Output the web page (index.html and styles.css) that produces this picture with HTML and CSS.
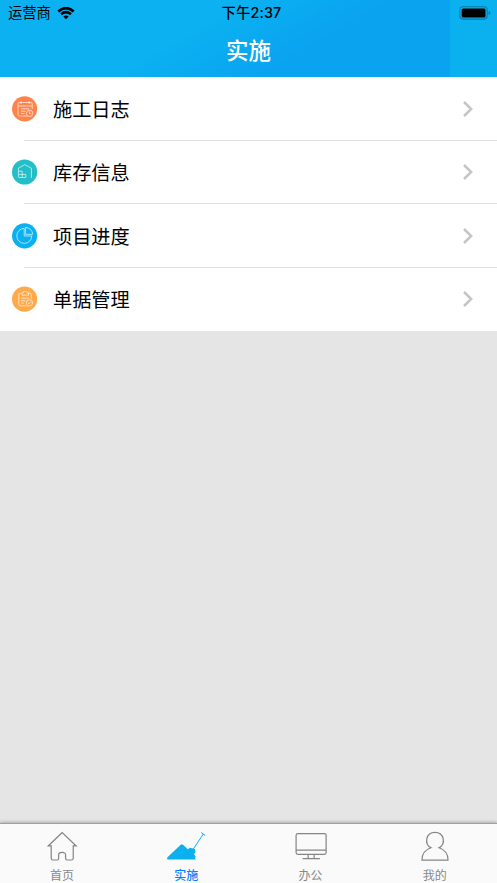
FILE: index.html
```html
<!DOCTYPE html>
<html lang="zh-CN">
<head>
<meta charset="utf-8">
<title>实施</title>
<link rel="stylesheet" href="styles.css">
</head>
<body>
<div class="app">
  <header class="header">
    <div class="status">
      <div class="carrier"><span>运营商</span>
        <svg class="wifi" viewBox="0 0 17 13"><path d="M8.5 12.3 5.8 9.6Q8.5 7.5 11.2 9.6Z"/><path class="arc" d="M3.5 7.2Q8.5 3 13.5 7.2M.8 4.4Q8.5-2.2 16.2 4.4"/></svg>
      </div>
      <div class="clock">下午2:37</div>
      <svg class="battery" viewBox="0 0 32 14"><rect class="shell" x=".8" y=".7" width="27.4" height="12.4" rx="3"/><rect x="2.7" y="2.6" width="23.8" height="8.8" rx="1.5"/><path class="tip" d="M29.6 4.9q1.8 0 1.8 2t-1.8 2z"/></svg>
    </div>
    <h1 class="title">实施</h1>
  </header>
  <main class="content">
    <ul class="list">
      <li class="row">
        <svg class="icon orange" viewBox="0 0 26 26"><circle cx="12.6" cy="12.8" r="12.6"/><path d="M15 20H7.4Q6 20 6 18.6V7.8Q6 6.5 7.4 6.5H18.8Q20.2 6.5 20.2 7.8V13M6 10H20.2M9 5v3M17.2 5v3M9 12.8h8M9 15.2h4.5M9 17.5h3.5M17.5 15.3v2.2h1.8"/><circle class="line" cx="17.6" cy="17.3" r="3.2"/></svg>
        <span class="label">施工日志</span>
        <svg class="chevron" viewBox="0 0 10 16"><path d="m1 1 7.2 7L1 15"/></svg>
      </li>
      <li class="row">
        <svg class="icon teal" viewBox="0 0 26 26"><circle cx="12.6" cy="13" r="12.6"/><path d="M6.4 18.5V9.2L12.8 5.6 19.4 9.2V18.8M7 12.2H10.2V18.5H7M7 15.4H13.8V18.5H10.2"/></svg>
        <span class="label">库存信息</span>
        <svg class="chevron" viewBox="0 0 10 16"><path d="m1 1 7.2 7L1 15"/></svg>
      </li>
      <li class="row">
        <svg class="icon blue" viewBox="0 0 26 26"><circle cx="12.6" cy="12.8" r="12.6"/><path d="M12.2 5.4A7.5 7.5 0 1 0 19.8 13H12.2ZM13.6 4.4V11.4H20.6A7 7 0 0 0 13.6 4.4Z"/></svg>
        <span class="label">项目进度</span>
        <svg class="chevron" viewBox="0 0 10 16"><path d="m1 1 7.2 7L1 15"/></svg>
      </li>
      <li class="row">
        <svg class="icon amber" viewBox="0 0 26 26"><circle cx="12.6" cy="13.2" r="12.6"/><path d="M14 19.8H8Q6.8 19.8 6.8 18.6V8.5Q6.8 7.2 8 7.2H10M16.5 7.2H18Q19.3 7.2 19.3 8.5V13M10 9.2V6.8Q11.7 7 11.8 5.3H14.7Q14.8 7 16.5 6.8V9.2ZM9 12.2h8M9 14.8h4.5M9 17.2h3M15.8 16.7l1.2 1.2 2-2.3"/><circle class="line" cx="17.4" cy="16.9" r="3.2"/></svg>
        <span class="label">单据管理</span>
        <svg class="chevron" viewBox="0 0 10 16"><path d="m1 1 7.2 7L1 15"/></svg>
      </li>
    </ul>
  </main>
  <nav class="tabs">
    <div class="tab">
      <svg class="tab-icon" viewBox="0 0 40 30"><path d="M20.2 1.2 6.9 14H9.7V25.7Q9.7 27.4 11.4 27.4H15.3Q16.8 27.4 16.8 25.7V22.7Q16.8 20.2 20.2 20.2T23.4 22.7V25.7Q23.4 27.4 24.9 27.4H29Q30.7 27.4 30.7 25.7V14H33.5Z"/></svg>
      <span>首页</span>
    </div>
    <div class="tab active">
      <svg class="tab-icon" viewBox="0 0 40 30"><path class="mound" d="M1.8 27.4Q.2 26.8 1.5 25.3L14.7 12.8Q15.8 11.8 17 12.8L21.8 17.2 24 15.8 28.8 17.1 29.6 20.3 28 22 29.8 24.8 28.8 26 30 27.4Z"/><path class="shovel" d="M26.7 18 37.3 2M35.2 .5 39.3 3.5"/></svg>
      <span>实施</span>
    </div>
    <div class="tab">
      <svg class="tab-icon" viewBox="0 0 40 30"><rect x="5.8" y="2.2" width="28.6" height="19.8" rx="1.7"/><path d="M5.8 18H34.4M17.3 22V25.7M23 22V25.7M12 26H28.5"/></svg>
      <span>办公</span>
    </div>
    <div class="tab">
      <svg class="tab-icon" viewBox="0 0 40 30"><path d="M16.2 15.7C9.3 12 11.3 1 20 1S30.7 12 23.8 15.7Q32.5 18.6 32.4 27.5H7.6Q7.5 18.6 16.2 15.7Z"/></svg>
      <span>我的</span>
    </div>
  </nav>
</div>
</body>
</html>
```
FILE: styles.css
```css
* { box-sizing: border-box; }
body { margin: 0; font-family: Inter, "Noto Sans CJK SC", sans-serif; color: #000; }
.app { height: 883px; display: flex; flex-direction: column; overflow: hidden; background: #e5e5e5; }
.header {
  height: 77px;
  flex: none;
  background: linear-gradient(150deg, #0bb2f0 0%, #0bb1f0 42%, #0aa3f0 67%, #0aa3f0 100%) left / 450px 100% no-repeat #0bb0ef;
}
.status { height: 26px; padding: 0 6px 0 8px; display: grid; grid-template-columns: 1fr auto 1fr; align-items: center; font-size: 14.3px; line-height: 26px; }
.carrier { display: flex; align-items: center; gap: 6px; }
.wifi { width: 18px; height: 13px; }
.arc { fill: none; stroke: #000; stroke-width: 2.6; }
.clock { font-weight: 500; padding-left: 4px; letter-spacing: .15px; }
.battery { width: 32px; height: 14px; justify-self: end; }
.shell { fill: none; stroke: #087ba8; stroke-width: 1.1; }
.tip { fill: #087ba8; }
.title { margin: 8px 0 0; color: #fff; text-align: center; font-size: 22.5px; line-height: 34px; font-weight: 500; }
.content { flex: 1; }
.list { margin: 0; padding: 0; list-style: none; background: #fff; }
.row { height: 63.5px; padding: 0 24px 0 12px; display: flex; align-items: center; background: linear-gradient(#e2e2e2, #e2e2e2) 24px 100% / 100% 1px no-repeat; }
.row:last-child { background: none; }
.icon { width: 26px; height: 26px; fill: none; stroke: rgba(255, 255, 255, .75); stroke-width: .85; }
.icon circle:first-child { stroke: none; }
.orange circle:first-child { fill: #ff844b; }
.teal circle:first-child { fill: #24bec8; }
.blue circle:first-child { fill: #0bb0f0; }
.amber circle:first-child { fill: #ffa94a; }
.icon .line { fill: none; }
.label { margin-left: 15px; padding-top: 2px; flex: 1; font-size: 19.2px; line-height: 28px; }
.chevron { width: 10px; height: 16px; fill: none; stroke: #c5c5c9; stroke-width: 2.5; }
.tabs { height: 60px; flex: none; display: flex; background: #fafafa; border-top: 1px solid #a0a0a0; box-shadow: 0 -1px 3px rgba(0, 0, 0, .25); color: #888; }
.tab { flex: 1; display: flex; flex-direction: column; align-items: center; padding-top: 7px; font-size: 12px; line-height: 18px; }
.tab-icon { width: 42px; height: 32px; flex: none; margin-bottom: 4px; fill: none; stroke: #858585; stroke-width: 1.15; }
.active { color: #087fff; font-weight: 500; }
.active .tab-icon { width: 40px; stroke: #0bb0ef; }
.active .shovel { stroke-width: 1; }
.mound { fill: #0bb0ef; stroke: none; }
```
